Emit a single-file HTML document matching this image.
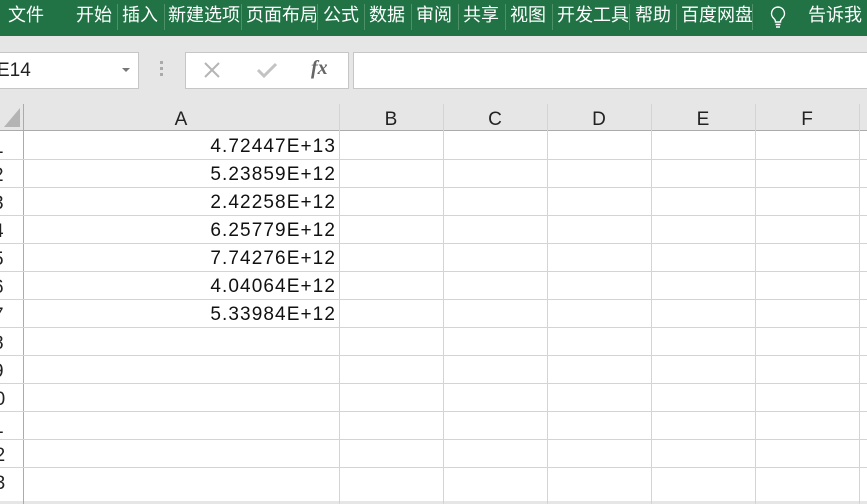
<!DOCTYPE html>
<html><head><meta charset="utf-8">
<style>
*{margin:0;padding:0;box-sizing:border-box}
body{width:867px;height:492px;overflow:hidden;background:#e6e6e6;font-family:"Liberation Sans","Noto Sans CJK SC",sans-serif;position:relative}
.rib{position:absolute;left:0;top:0;width:867px;height:36px;background:#217346;color:#fff;font-size:18px}
.rib span{position:absolute;top:4px;line-height:22px;white-space:nowrap;overflow:hidden}
.sep{position:absolute;top:4px;width:1px;height:26px;background:#4e9068}
.box{position:absolute;background:#fff;border:1px solid #c6c6c6}
.hdr{position:absolute;top:104px;height:27px;background:#e6e6e6;border-bottom:1px solid #ababab;font-size:19px;text-align:center;line-height:32px;color:#222}
.grid{position:absolute;left:0;top:131px;width:867px;height:370px;background:#fff}
.vl{position:absolute;top:104px;width:1px;height:400px;background:#d4d4d4}
.hl{position:absolute;left:0;width:867px;height:1px;background:#d4d4d4}
.rn{position:absolute;left:-7px;width:27px;font-size:19px;line-height:29px;color:#222}
.v{position:absolute;left:23px;width:313px;text-align:right;font-size:19px;letter-spacing:1.1px;line-height:30px;color:#111}
</style></head><body>
<div class="rib">
<span style="left:8px">文件</span>
<span style="left:76px">开始</span><div class="sep" style="left:117px"></div>
<span style="left:122px">插入</span><div class="sep" style="left:164px"></div>
<span style="left:168px;width:72px">新建选项</span><div class="sep" style="left:241px"></div>
<span style="left:246px;width:70px">页面布局</span><div class="sep" style="left:317px"></div>
<span style="left:323px">公式</span><div class="sep" style="left:364px"></div>
<span style="left:369px">数据</span><div class="sep" style="left:411px"></div>
<span style="left:416px">审阅</span><div class="sep" style="left:458px"></div>
<span style="left:463px">共享</span><div class="sep" style="left:505px"></div>
<span style="left:510px">视图</span><div class="sep" style="left:552px"></div>
<span style="left:557px;width:71px">开发工具</span><div class="sep" style="left:629px"></div>
<span style="left:635px">帮助</span><div class="sep" style="left:676px"></div>
<span style="left:681px;width:71px">百度网盘</span><div class="sep" style="left:752px"></div>
<svg style="position:absolute;left:768px;top:5px" width="20" height="26" viewBox="0 0 20 26"><path d="M10 2a6.5 6.5 0 0 0-4 11.6c1 .9 1.5 2 1.5 3.4h5c0-1.4.5-2.5 1.5-3.4A6.5 6.5 0 0 0 10 2z" fill="none" stroke="#fff" stroke-width="1.4"/><path d="M7.5 19.5h5M8 22h4" stroke="#fff" stroke-width="1.4"/></svg>
<span style="left:808px">告诉我</span>
</div>
<div class="box" style="left:-2px;top:52px;width:141px;height:37px"></div>
<div style="position:absolute;left:-3px;top:60px;font-size:19px;color:#222">E14</div>
<div style="position:absolute;left:122px;top:68px;border-left:4px solid transparent;border-right:4px solid transparent;border-top:4px solid #777"></div>
<div style="position:absolute;left:160px;top:61px;width:3px;height:3px;background:#aaa;box-shadow:0 6px #aaa,0 12px #aaa"></div>
<div class="box" style="left:185px;top:52px;width:164px;height:37px"></div>
<svg style="position:absolute;left:203px;top:62px" width="18" height="16"><path d="M2 1l14 14M16 1L2 15" stroke="#b5b5b5" stroke-width="2"/></svg>
<svg style="position:absolute;left:256px;top:62px" width="22" height="16"><path d="M2 8l6 6L20 2" stroke="#c3c3c3" stroke-width="3" fill="none"/></svg>
<div style="position:absolute;left:311px;top:57px;font-family:'Liberation Serif',serif;font-style:italic;font-weight:bold;font-size:20px;color:#666">fx</div>
<div class="box" style="left:353px;top:52px;width:520px;height:37px"></div>
<div class="grid"></div>
<div class="hdr" style="left:0;width:23px"></div>
<svg style="position:absolute;left:3px;top:107px" width="18" height="21"><path d="M17 1V20H1z" fill="#b4b4b4"/></svg>
<div class="hdr" style="left:23px;width:316px">A</div>
<div class="hdr" style="left:339px;width:104px">B</div>
<div class="hdr" style="left:443px;width:104px">C</div>
<div class="hdr" style="left:547px;width:104px">D</div>
<div class="hdr" style="left:651px;width:104px">E</div>
<div class="hdr" style="left:755px;width:104px">F</div>
<div class="hdr" style="left:859px;width:10px"></div>
<div class="vl" style="left:23px;background:#ababab"></div>
<div class="vl" style="left:339px"></div><div class="vl" style="left:443px"></div><div class="vl" style="left:547px"></div><div class="vl" style="left:651px"></div><div class="vl" style="left:755px"></div><div class="vl" style="left:859px"></div>
<div class="hl" style="top:159px"></div><div class="hl" style="top:187px"></div><div class="hl" style="top:215px"></div><div class="hl" style="top:243px"></div><div class="hl" style="top:271px"></div><div class="hl" style="top:299px"></div><div class="hl" style="top:327px"></div><div class="hl" style="top:355px"></div><div class="hl" style="top:383px"></div><div class="hl" style="top:411px"></div><div class="hl" style="top:439px"></div><div class="hl" style="top:467px"></div>
<div class="rn" style="top:133px">1</div><div class="rn" style="top:161px">2</div><div class="rn" style="top:189px">3</div><div class="rn" style="top:217px">4</div><div class="rn" style="top:245px">5</div><div class="rn" style="top:273px">6</div><div class="rn" style="top:301px">7</div><div class="rn" style="top:329px">8</div><div class="rn" style="top:357px">9</div><div class="rn" style="top:385px;left:-16px">10</div><div class="rn" style="top:413px;left:-16px">11</div><div class="rn" style="top:441px;left:-16px">12</div><div class="rn" style="top:469px;left:-16px">13</div>
<div class="v" style="top:132px">4.72447E+13</div>
<div class="v" style="top:160px">5.23859E+12</div>
<div class="v" style="top:188px">2.42258E+12</div>
<div class="v" style="top:216px">6.25779E+12</div>
<div class="v" style="top:244px">7.74276E+12</div>
<div class="v" style="top:272px">4.04064E+12</div>
<div class="v" style="top:300px">5.33984E+12</div>
</body></html>
